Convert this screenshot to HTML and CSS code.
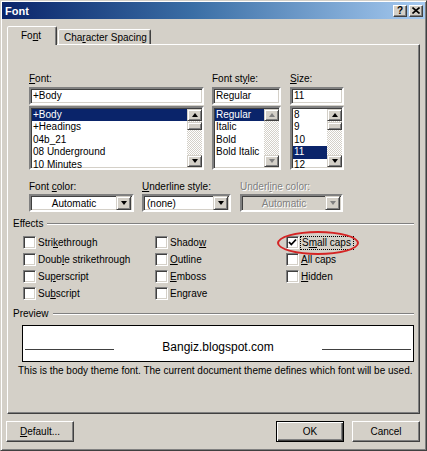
FILE: index.html
```html
<!DOCTYPE html>
<html lang="en">
<head>
  <meta charset="UTF-8">
  <title>Font</title>
  <link rel="stylesheet" href="styles.css">
</head>
<body>
  <div class="window">
    <!-- Title bar -->
    <div class="titlebar">
      <span class="title">Font</span>
      <div class="title-buttons">
        <span class="title-btn help">?</span>
        <span class="title-btn close">
          <svg width="8" height="7" viewBox="0 0 8 7"><path d="M0.5 0.5 L7.5 6.5 M7.5 0.5 L0.5 6.5" stroke="#000" stroke-width="1.6"/></svg>
        </span>
      </div>
    </div>

    <!-- Tabs -->
    <div class="tabs">
      <div class="tab tab-active">Fo<u>n</u>t</div>
      <div class="tab">Cha<u>r</u>acter Spacing</div>
    </div>

    <div class="panel">
      <div class="font-row">
        <div class="field field-font">
          <div class="label"><u>F</u>ont:</div>
          <div class="input">+Body</div>
          <div class="list">
            <div class="list-items">
              <div class="item selected">+Body</div>
              <div class="item">+Headings</div>
              <div class="item">04b_21</div>
              <div class="item">08 Underground</div>
              <div class="item">10 Minutes</div>
            </div>
            <div class="scrollbar">
              <div class="sb-btn"><span class="arrow-up"></span></div>
              <div class="sb-track"><div class="sb-thumb"></div></div>
              <div class="sb-btn"><span class="arrow-down"></span></div>
            </div>
          </div>
        </div>

        <div class="field field-style">
          <div class="label">Font st<u>y</u>le:</div>
          <div class="input">Regular</div>
          <div class="list">
            <div class="list-items">
              <div class="item selected">Regular</div>
              <div class="item">Italic</div>
              <div class="item">Bold</div>
              <div class="item">Bold Italic</div>
            </div>
            <div class="scrollbar">
              <div class="sb-btn"><span class="arrow-up disabled"></span></div>
              <div class="sb-track"></div>
              <div class="sb-btn"><span class="arrow-down disabled"></span></div>
            </div>
          </div>
        </div>

        <div class="field field-size">
          <div class="label"><u>S</u>ize:</div>
          <div class="input">11</div>
          <div class="list">
            <div class="list-items">
              <div class="item">8</div>
              <div class="item">9</div>
              <div class="item">10</div>
              <div class="item selected">11</div>
              <div class="item">12</div>
            </div>
            <div class="scrollbar">
              <div class="sb-btn"><span class="arrow-up"></span></div>
              <div class="sb-track"><div class="sb-thumb"></div></div>
              <div class="sb-btn"><span class="arrow-down"></span></div>
            </div>
          </div>
        </div>
      </div>

      <div class="color-row">
        <div class="field field-color">
          <div class="label">Font <u>c</u>olor:</div>
          <div class="select">
            <span class="select-text center">Automatic</span>
            <span class="select-btn"><span class="arrow-down"></span></span>
          </div>
        </div>
        <div class="field field-ustyle">
          <div class="label"><u>U</u>nderline style:</div>
          <div class="select">
            <span class="select-text">(none)</span>
            <span class="select-btn"><span class="arrow-down"></span></span>
          </div>
        </div>
        <div class="field field-ucolor">
          <div class="label disabled-text">Underl<u>i</u>ne color:</div>
          <div class="select select-disabled">
            <span class="select-text center disabled-text">Automatic</span>
            <span class="select-btn"><span class="arrow-down disabled"></span></span>
          </div>
        </div>
      </div>

      <!-- Effects -->
      <div class="group">
        <div class="group-header"><span>Effects</span><span class="etched"></span></div>
        <div class="effects">
          <div class="check"><span class="box"></span><span>Stri<u>k</u>ethrough</span></div>
          <div class="check"><span class="box"></span><span>Shado<u>w</u></span></div>
          <div class="check"><span class="box"><svg width="9" height="9" viewBox="0 0 9 9"><path d="M1 4 L3.3 6.5 L8 1.5" fill="none" stroke="#000" stroke-width="1.8"/></svg></span><span class="focus">S<u>m</u>all caps</span></div>

          <div class="check"><span class="box"></span><span>Doub<u>l</u>e strikethrough</span></div>
          <div class="check"><span class="box"></span><span><u>O</u>utline</span></div>
          <div class="check"><span class="box"></span><span><u>A</u>ll caps</span></div>

          <div class="check"><span class="box"></span><span>Su<u>p</u>erscript</span></div>
          <div class="check"><span class="box"></span><span><u>E</u>mboss</span></div>
          <div class="check"><span class="box"></span><span><u>H</u>idden</span></div>

          <div class="check"><span class="box"></span><span>Su<u>b</u>script</span></div>
          <div class="check"><span class="box"></span><span>En<u>g</u>rave</span></div>
          <div class="check"></div>
        </div>
      </div>

      <!-- Preview -->
      <div class="group group-preview">
        <div class="group-header"><span>Preview</span><span class="etched"></span></div>
        <div class="preview">
          <span class="preview-line"></span>
          <span class="preview-text">Bangiz.blogspot.com</span>
          <span class="preview-line"></span>
        </div>
        <p class="note">This is the body theme font. The current document theme defines which font will be used.</p>
      </div>
    </div>

    <!-- Buttons -->
    <div class="buttons">
      <div class="button"><u>D</u>efault...</div>
      <div class="spacer"></div>
      <div class="button button-default">OK</div>
      <div class="button">Cancel</div>
    </div>

    <div class="annotation"></div>
  </div>
</body>
</html>
```

FILE: styles.css
```css
* {
  margin: 0;
  padding: 0;
  box-sizing: border-box;
}

body {
  width: 427px;
  height: 451px;
  background: #d4d0c8;
  font-family: "Liberation Sans", Arial, sans-serif;
  font-size: 10px;
  color: #000;
  overflow: hidden;
}

u {
  text-decoration: underline;
  text-underline-offset: 1px;
}

.window {
  position: relative;
  width: 427px;
  height: 451px;
  border: 1px solid;
  border-color: #d4d0c8 #404040 #404040 #d4d0c8;
  box-shadow: inset 1px 1px #fff, inset -1px -1px #808080;
  padding: 1px;
  background: #d4d0c8;
}

/* Title bar */
.titlebar {
  height: 17px;
  display: flex;
  align-items: center;
  justify-content: space-between;
  padding: 0 2px 0 3px;
  background: linear-gradient(to right, #0a246a 0%, #3a6ea5 45%, #a6caf0 100%);
}

.title {
  color: #fff;
  font-weight: bold;
  font-size: 11px;
}

.title-buttons {
  display: flex;
  gap: 2px;
}

.title-btn {
  width: 14px;
  height: 12px;
  display: flex;
  align-items: center;
  justify-content: center;
  background: #d4d0c8;
  border: 1px solid;
  border-color: #fff #404040 #404040 #fff;
  box-shadow: inset -1px -1px #808080;
  font-weight: bold;
  font-size: 10px;
  line-height: 1;
}

/* Tabs */
.tabs {
  display: flex;
  align-items: flex-end;
  height: 18px;
  margin: 7px 0 0 5px;
  position: relative;
  z-index: 1;
}

.tab {
  height: 15px;
  display: flex;
  align-items: center;
  white-space: nowrap;
  border: 1px solid;
  border-bottom: none;
  border-color: #fff #404040 transparent #fff;
  border-radius: 2px 2px 0 0;
  box-shadow: inset -1px 0 #808080;
  background: #d4d0c8;
  margin-left: 1px;
}

.tab-active {
  height: 19px;
  width: 50px;
  margin-left: 0;
  margin-bottom: -1px;
  padding: 0 0 2px 13px;
}

.tab:not(.tab-active) {
  width: 93px;
  padding-left: 5px;
}

/* Panel */
.panel {
  height: 370px;
  margin: 0 5px 0 5px;
  border: 1px solid;
  border-color: #fff #404040 #404040 #fff;
  box-shadow: inset -1px -1px #808080;
  padding-top: 27px;
}

.label {
  height: 13px;
  line-height: 13px;
  margin-bottom: 2px;
  white-space: nowrap;
}

.font-row {
  display: flex;
  padding-left: 21px;
  gap: 8px;
}

.field-font { width: 175px; }
.field-style { width: 69px; }
.field-size { width: 54px; margin-left: 1px; }

.input,
.list,
.select {
  border: 2px solid;
  border-color: #808080 #fff #fff #808080;
  box-shadow: inset 1px 1px #404040, inset -1px -1px #d4d0c8;
  background: #fff;
}

.input {
  height: 18px;
  line-height: 14px;
  padding-left: 2px;
  margin-bottom: 1px;
}

.list {
  height: 64px;
  display: flex;
  padding: 1px 0 1px 1px;
}

.list-items {
  flex: 1;
  min-width: 0;
}

.item {
  height: 12.4px;
  line-height: 12px;
  padding-left: 1px;
  white-space: nowrap;
}

.item.selected {
  background: #0a246a;
  color: #fff;
}

.scrollbar {
  width: 15px;
  display: flex;
  flex-direction: column;
}

.sb-btn {
  height: 12px;
  display: flex;
  align-items: center;
  justify-content: center;
  background: #d4d0c8;
  border: 1px solid;
  border-color: #d4d0c8 #404040 #404040 #d4d0c8;
  box-shadow: inset 1px 1px #fff, inset -1px -1px #808080;
}

.sb-track {
  flex: 1;
  background: repeating-conic-gradient(#fff 0 25%, #d4d0c8 0 50%) 0 0 / 2px 2px;
  padding-top: 1px;
}

.sb-thumb {
  height: 8px;
  background: #d4d0c8;
  border: 1px solid;
  border-color: #d4d0c8 #404040 #404040 #d4d0c8;
  box-shadow: inset 1px 1px #fff, inset -1px -1px #808080;
}

.arrow-up,
.arrow-down {
  width: 0;
  height: 0;
  border-left: 3.5px solid transparent;
  border-right: 3.5px solid transparent;
}

.arrow-up { border-bottom: 4px solid #000; }
.arrow-down { border-top: 4px solid #000; }
.arrow-up.disabled { border-bottom-color: #808080; }
.arrow-down.disabled { border-top-color: #808080; }

/* Colour / underline row */
.color-row {
  display: flex;
  padding-left: 21px;
  margin-top: 10px;
}

.color-row .label {
  margin-bottom: 1px;
}

.field-color { width: 105px; }
.field-ustyle { width: 89px; margin-left: 8px; }
.field-ucolor { width: 103px; margin-left: 9px; }

.select {
  height: 18px;
  display: flex;
  align-items: center;
  padding: 1px;
}

.select-text {
  flex: 1;
  padding-left: 2px;
  white-space: nowrap;
}

.select-text.center {
  text-align: center;
  padding-left: 0;
}

.select-btn {
  width: 15px;
  height: 14px;
  display: flex;
  align-items: center;
  justify-content: center;
  background: #d4d0c8;
  border: 1px solid;
  border-color: #d4d0c8 #404040 #404040 #d4d0c8;
  box-shadow: inset 1px 1px #fff, inset -1px -1px #808080;
}

.select-disabled {
  background: #d4d0c8;
}

.disabled-text {
  color: #808080;
  text-shadow: 1px 1px #fff;
}

/* Group boxes */
.group {
  padding: 0 5px 0 5px;
  margin-top: 5px;
}

.group-header {
  display: flex;
  align-items: center;
  height: 13px;
}

.etched {
  flex: 1;
  margin-left: 4px;
  border-top: 1px solid #808080;
  border-bottom: 1px solid #fff;
}

.effects {
  display: grid;
  grid-template-columns: 132px 131px 1fr;
  grid-auto-rows: 17px;
  padding-left: 10px;
  margin-top: 4px;
}

.check {
  display: flex;
  align-items: center;
  gap: 2px;
  white-space: nowrap;
}

.box {
  width: 13px;
  height: 13px;
  flex: none;
  display: flex;
  align-items: center;
  justify-content: center;
  background: #fff;
  border: 1px solid;
  border-color: #808080 #fff #fff #808080;
  box-shadow: inset 1px 1px #404040, inset -1px -1px #d4d0c8;
}

.focus {
  outline: 1px dotted #000;
  outline-offset: 0;
  padding: 0 2px 1px 1px;
}

.group-preview {
  margin-top: 5px;
}

.preview {
  height: 37px;
  margin: 5px 0 0 9px;
  border: 1px solid #000;
  background: #fff;
  display: flex;
  align-items: center;
  padding: 6px 2px 0 2px;
}

.preview-line {
  flex: 1;
  height: 1px;
  background: #404040;
  margin-top: 6px;
}

.preview-text {
  font-size: 12px;
  padding: 0 48px;
}

.note {
  margin: 2px 0 0 5px;
  line-height: 13px;
  white-space: nowrap;
}

/* Bottom buttons */
.buttons {
  display: flex;
  gap: 8px;
  margin: 7px 5px 0 4px;
}

.spacer { flex: 1; }

.button {
  width: 68px;
  height: 21px;
  display: flex;
  align-items: center;
  justify-content: center;
  background: #d4d0c8;
  border: 1px solid;
  border-color: #fff #404040 #404040 #fff;
  box-shadow: inset -1px -1px #808080;
}

.button-default {
  border: 1px solid #000;
  box-shadow: inset 1px 1px #fff, inset -1px -1px #404040, inset -2px -2px #808080;
}

/* red marker drawn over the dialog */
.annotation {
  position: absolute;
  left: 276px;
  top: 230px;
  width: 82px;
  height: 24px;
  border: 2px solid #d42424;
  border-radius: 50%;
  pointer-events: none;
}
```
